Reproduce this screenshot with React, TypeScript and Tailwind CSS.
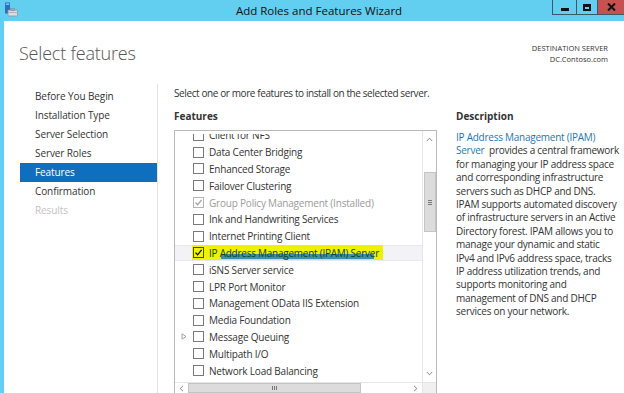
import React from 'react';

const FONT = '"Open Sans", "Noto Sans", sans-serif';

type Row = { label: string; checked?: boolean; disabled?: boolean; selected?: boolean; expander?: boolean };

const rows: Row[] = [
  { label: 'Client for NFS' },
  { label: 'Data Center Bridging' },
  { label: 'Enhanced Storage' },
  { label: 'Failover Clustering' },
  { label: 'Group Policy Management (Installed)', checked: true, disabled: true },
  { label: 'Ink and Handwriting Services' },
  { label: 'Internet Printing Client' },
  { label: 'IP Address Management (IPAM) Server', checked: true, selected: true },
  { label: 'iSNS Server service' },
  { label: 'LPR Port Monitor' },
  { label: 'Management OData IIS Extension' },
  { label: 'Media Foundation' },
  { label: 'Message Queuing', expander: true },
  { label: 'Multipath I/O' },
  { label: 'Network Load Balancing' },
];

const nav = [
  'Before You Begin',
  'Installation Type',
  'Server Selection',
  'Server Roles',
  'Features',
  'Confirmation',
  'Results',
];

function Check({ color }: { color: string }) {
  return (
    <svg width="9" height="9" viewBox="0 0 9 9">
      <path d="M1.5 4.6 L3.6 6.8 L7.6 1.8" fill="none" stroke={color} strokeWidth="1.3" />
    </svg>
  );
}

function Box({ checked, disabled, selected }: { checked?: boolean; disabled?: boolean; selected?: boolean }) {
  const border = disabled ? 'border-[#b5b5b5]' : selected ? 'border-[#4a4a00]' : 'border-[#7a7a7a]';
  const bg = selected ? 'bg-[#f0f300]' : 'bg-white';
  return (
    <div className={`w-[11px] h-[11px] border ${border} ${bg} flex items-center justify-center shrink-0`}>
      {checked && <Check color={disabled ? '#a0a0a0' : '#111'} />}
    </div>
  );
}

function TitleIcon() {
  return (
    <svg width="14" height="15" viewBox="0 0 14 15">
      <rect x="1" y="0.5" width="5" height="11" fill="#2a6fc0" />
      <rect x="1.8" y="1.5" width="3.4" height="1.3" fill="#9fd3ff" />
      <rect x="4" y="8" width="9.5" height="6" rx="0.8" fill="#d8dde2" stroke="#8a96a0" strokeWidth="0.8" />
      <rect x="6.5" y="6.5" width="4" height="2" fill="none" stroke="#8a96a0" strokeWidth="0.8" />
      <rect x="4" y="10" width="9.5" height="1" fill="#aab4bc" />
    </svg>
  );
}

export default function App() {
  return (
    <div
      className="w-[624px] h-[393px] bg-[#62cff0] flex flex-col overflow-hidden text-[#333]"
      style={{ fontFamily: FONT }}
    >
      {/* Title bar */}
      <div className="h-[21px] relative shrink-0">
        <div className="absolute left-[4px] top-[2px]">
          <TitleIcon />
        </div>
        <div className="w-full text-center text-[11.5px] leading-[21px] text-[#111] pl-[14px]">
          Add Roles and Features Wizard
        </div>
        <div className="absolute right-0 top-0 flex">
          <div className="w-[24px] h-[15px] border-l border-b border-[#3a5a66] bg-[#62cff0] flex items-end justify-center pb-[3px]">
            <div className="w-[8px] h-[3px] bg-[#111]" />
          </div>
          <div className="w-[21px] h-[15px] border-l border-b border-[#3a5a66] bg-[#62cff0] flex items-center justify-center">
            <div className="w-[8px] h-[7px] border-[2px] border-t-[3px] border-[#111]" />
          </div>
          <div className="w-[27px] h-[15px] border-l border-b border-[#3a5a66] bg-[#c75050] flex items-center justify-center">
            <svg width="9" height="8" viewBox="0 0 9 8">
              <path d="M1 0.5 L8 7.5 M8 0.5 L1 7.5" stroke="#111" strokeWidth="2" />
            </svg>
          </div>
        </div>
      </div>

      {/* Window body */}
      <div className="flex-1 ml-[4px] bg-white flex flex-col min-h-0">
        {/* Header */}
        <div className="h-[63px] shrink-0 flex justify-between pl-[15px] pr-[16px]">
          <div className="pt-[20px] text-[18px] font-light text-[#555] leading-[24px] tracking-[-0.2px]">
            Select features
          </div>
          <div className="pt-[22px] text-right text-[7.5px] leading-[11px] text-[#333]">
            <div>DESTINATION SERVER</div>
            <div>DC.Contoso.com</div>
          </div>
        </div>

        {/* Main */}
        <div className="flex-1 flex min-h-0">
          {/* Nav */}
          <div className="w-[154px] shrink-0 border-r border-[#e3e3e3] pl-[16px] pt-[3px]">
            {nav.map((n) => {
              const sel = n === 'Features';
              const dim = n === 'Results';
              return (
                <div
                  key={n}
                  className={`h-[19px] leading-[19px] pl-[15px] text-[10px] tracking-[-0.1px] ${
                    sel ? 'bg-[#0f6fbf] text-white' : dim ? 'text-[#c2c2c2]' : 'text-[#333]'
                  }`}
                >
                  {n}
                </div>
              );
            })}
          </div>

          {/* Content */}
          <div className="flex-1 flex pl-[16px] min-w-0">
            <div className="w-[263px] shrink-0 flex flex-col">
              <div className="pt-[2px] h-[20px] leading-[14px] text-[10px] tracking-[-0.4px] text-[#333] whitespace-nowrap">
                Select one or more features to install on the selected server.
              </div>
              <div className="h-[26px] leading-[16px] pt-[4px] text-[10px] font-bold text-[#333]">Features</div>
              {/* List box */}
              <div className="flex-1 border border-[#b9b9b9] border-b-0 flex flex-col min-h-0">
                <div className="flex-1 flex min-h-0">
                  <div className="flex-1 pt-[3px] flex flex-col min-h-0">
                    <div className="flex-1 overflow-hidden">
                      <div className="mt-[-7px]">
                        {rows.map((r) => (
                          <div
                            key={r.label}
                            className={`h-[16.8px] flex items-center ${
                              r.selected ? 'bg-[#f3f3f7] border-y border-[#e8e8ee]' : ''
                            }`}
                          >
                            <div className="w-[17px] shrink-0 flex items-center justify-center">
                              {r.expander && (
                                <svg width="6" height="7" viewBox="0 0 6 7">
                                  <path d="M1 0.8 L5 3.5 L1 6.2 Z" fill="none" stroke="#9a9a9a" strokeWidth="0.9" />
                                </svg>
                              )}
                            </div>
                            {r.selected ? (
                              <div className="relative flex items-center bg-[#ecf200] h-[15px] pl-[1px] pr-[4px]">
                                <div className="absolute left-[29px] right-[9px] bottom-[1px] h-[5px] bg-[#3d8fb0]" />
                                <Box checked selected />
                                <span className="relative ml-[5px] text-[10px] tracking-[-0.25px] text-[#10420f] whitespace-nowrap leading-[14px]">
                                  {r.label}
                                </span>
                              </div>
                            ) : (
                              <div className="flex items-center pl-[1px]">
                                <Box checked={r.checked} disabled={r.disabled} />
                                <span
                                  className={`ml-[5px] text-[10px] tracking-[-0.2px] whitespace-nowrap leading-[14px] ${
                                    r.disabled ? 'text-[#9b9b9b]' : 'text-[#333]'
                                  }`}
                                >
                                  {r.label}
                                </span>
                              </div>
                            )}
                          </div>
                        ))}
                      </div>
                    </div>
                  </div>
                  {/* Vertical scrollbar */}
                  <div className="w-[14px] shrink-0 border-l border-[#e6e6e6] bg-white flex flex-col items-center">
                    <div className="h-[17px] flex items-center justify-center">
                      <svg width="7" height="5" viewBox="0 0 7 5">
                        <path d="M0.8 4 L3.5 1.2 L6.2 4" fill="none" stroke="#777" strokeWidth="0.9" />
                      </svg>
                    </div>
                    <div className="h-[24px]" />
                    <div className="w-[12px] h-[60px] bg-[#dcdcdc] border border-[#c4c4c4] flex items-center justify-center">
                      <div className="flex flex-col gap-[1px]">
                        <div className="w-[4px] h-px bg-[#777]" />
                        <div className="w-[4px] h-px bg-[#777]" />
                        <div className="w-[4px] h-px bg-[#777]" />
                      </div>
                    </div>
                    <div className="flex-1" />
                    <div className="h-[17px] flex items-center justify-center">
                      <svg width="7" height="5" viewBox="0 0 7 5">
                        <path d="M0.8 1 L3.5 3.8 L6.2 1" fill="none" stroke="#777" strokeWidth="0.9" />
                      </svg>
                    </div>
                  </div>
                </div>
                {/* Horizontal scrollbar */}
                <div className="h-[11px] shrink-0 flex border-t border-[#e6e6e6]">
                  <div className="flex-1 flex items-center">
                    <div className="w-[13px] flex items-center justify-center">
                      <svg width="5" height="7" viewBox="0 0 5 7">
                        <path d="M4 0.8 L1.2 3.5 L4 6.2" fill="none" stroke="#777" strokeWidth="0.9" />
                      </svg>
                    </div>
                    <div className="w-[173px] h-[10px] bg-[#dcdcdc] border border-[#c4c4c4] flex items-center justify-center">
                      <div className="flex gap-[1px]">
                        <div className="w-px h-[4px] bg-[#777]" />
                        <div className="w-px h-[4px] bg-[#777]" />
                        <div className="w-px h-[4px] bg-[#777]" />
                      </div>
                    </div>
                    <div className="flex-1" />
                    <div className="w-[13px] flex items-center justify-center">
                      <svg width="5" height="7" viewBox="0 0 5 7">
                        <path d="M1 0.8 L3.8 3.5 L1 6.2" fill="none" stroke="#777" strokeWidth="0.9" />
                      </svg>
                    </div>
                  </div>
                  <div className="w-[14px] border-l border-[#e6e6e6] bg-[#f0f0f0]" />
                </div>
              </div>
            </div>

            {/* Description */}
            <div className="pl-[19px] pt-[24px] flex-1 min-w-0">
              <div className="h-[23px] leading-[16px] text-[10px] font-bold text-[#333]">Description</div>
              <div className="text-[10px] leading-[13.4px] tracking-[-0.25px] text-[#333] whitespace-nowrap">
                <span className="text-[#1f78b4]">IP Address Management (IPAM)</span>
                <br />
                <span className="text-[#1f78b4]">Server</span>&nbsp; provides a central framework
                <br />
                for managing your IP address space
                <br />
                and corresponding infrastructure
                <br />
                servers such as DHCP and DNS.
                <br />
                IPAM supports automated discovery
                <br />
                of infrastructure servers in an Active
                <br />
                Directory forest. IPAM allows you to
                <br />
                manage your dynamic and static
                <br />
                IPv4 and IPv6 address space, tracks
                <br />
                IP address utilization trends, and
                <br />
                supports monitoring and
                <br />
                management of DNS and DHCP
                <br />
                services on your network.
              </div>
            </div>
          </div>
        </div>
      </div>
    </div>
  );
}
